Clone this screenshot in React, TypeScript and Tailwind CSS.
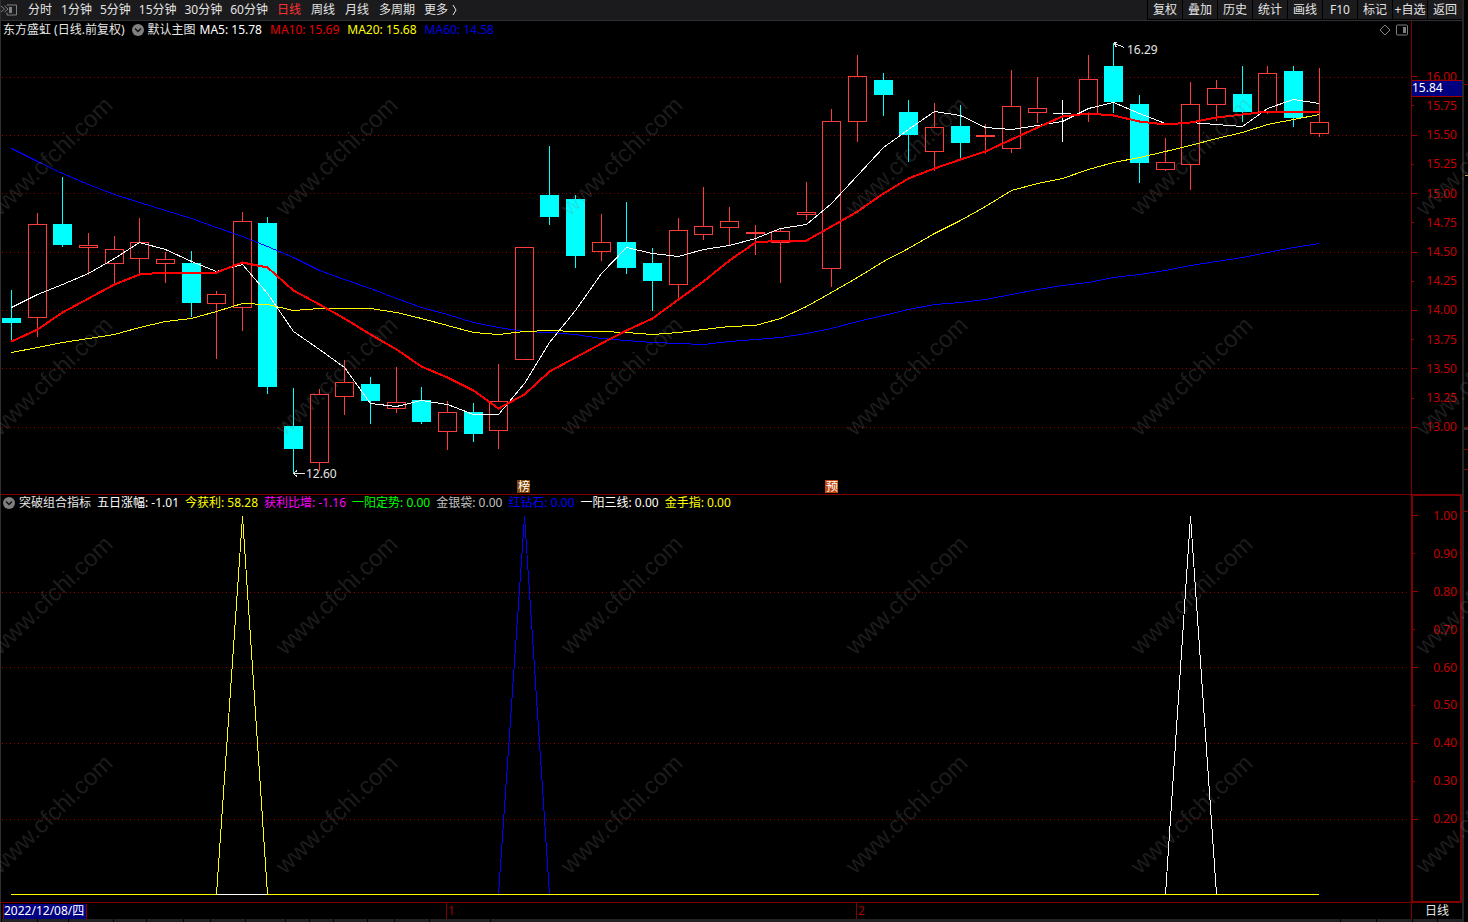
import React from 'react'

type Candle = [x: number, high: number, top: number, bottom: number, low: number, kind: 'up' | 'down' | 'flat']

const MINUTES = ['1分钟', '5分钟', '15分钟', '30分钟', '60分钟']
const PERIODS = ['日线', '周线', '月线', '多周期']
const ACTIONS = ['复权', '叠加', '历史', '统计', '画线', 'F10', '标记', '+自选', '返回']

const PRICES = ['16.00', '15.75', '15.50', '15.25', '15.00', '14.75', '14.50', '14.25', '14.00', '13.75', '13.50', '13.25', '13.00']
const LEVELS = ['1.00', '0.90', '0.80', '0.70', '0.60', '0.50', '0.40', '0.30', '0.20']

const CANDLES: Candle[] = [
  [11, 290, 318, 323, 340, 'down'],
  [37, 213, 224, 318, 337, 'up'],
  [62, 177, 224, 245, 247, 'down'],
  [88, 233, 245, 248, 275, 'up'],
  [114, 236, 249, 264, 286, 'up'],
  [139, 218, 242, 259, 274, 'up'],
  [165, 252, 259, 264, 283, 'up'],
  [191, 251, 263, 303, 317, 'down'],
  [216, 291, 294, 304, 359, 'up'],
  [242, 212, 221, 308, 331, 'up'],
  [267, 217, 223, 387, 394, 'down'],
  [293, 388, 426, 449, 473, 'down'],
  [319, 389, 394, 463, 471, 'up'],
  [344, 360, 382, 397, 415, 'up'],
  [370, 377, 384, 401, 424, 'down'],
  [396, 367, 402, 409, 413, 'up'],
  [421, 387, 400, 422, 424, 'down'],
  [447, 401, 412, 432, 450, 'up'],
  [473, 403, 412, 434, 442, 'down'],
  [498, 364, 401, 431, 449, 'up'],
  [524, 247, 247, 360, 360, 'up'],
  [549, 146, 195, 217, 225, 'down'],
  [575, 195, 199, 256, 268, 'down'],
  [601, 214, 242, 252, 261, 'up'],
  [626, 202, 242, 268, 274, 'down'],
  [652, 248, 263, 281, 311, 'down'],
  [678, 218, 230, 285, 298, 'up'],
  [703, 187, 226, 235, 240, 'up'],
  [729, 207, 221, 228, 245, 'up'],
  [755, 225, 232, 234, 255, 'up'],
  [780, 229, 231, 243, 283, 'up'],
  [806, 182, 212, 215, 220, 'up'],
  [831, 109, 121, 269, 287, 'up'],
  [857, 55, 76, 122, 142, 'up'],
  [883, 73, 80, 95, 116, 'down'],
  [908, 100, 112, 135, 162, 'down'],
  [934, 103, 127, 152, 171, 'up'],
  [960, 105, 126, 143, 158, 'down'],
  [985, 124, 135, 137, 154, 'up'],
  [1011, 70, 106, 149, 153, 'up'],
  [1037, 77, 108, 113, 123, 'up'],
  [1062, 100, 113, 114, 142, 'flat'],
  [1088, 55, 79, 114, 122, 'up'],
  [1113, 43, 66, 102, 113, 'down'],
  [1139, 95, 104, 163, 183, 'down'],
  [1165, 138, 162, 170, 171, 'up'],
  [1190, 82, 104, 165, 190, 'up'],
  [1216, 80, 88, 105, 121, 'up'],
  [1242, 66, 94, 112, 122, 'down'],
  [1267, 66, 73, 112, 114, 'up'],
  [1293, 66, 71, 118, 127, 'down'],
  [1319, 68, 122, 134, 137, 'up'],
]

const MA5 = [
  307, 294, 284, 273, 258, 242, 249, 261, 271, 264, 293, 331, 349, 367, 403, 406, 400, 404, 414, 414, 383, 342, 310, 273, 247, 253,
  256, 249, 245, 238, 228, 224, 203, 175, 147, 129, 111, 115, 127, 129, 125, 121, 108, 102, 113, 123, 122, 124, 126, 108, 99, 103,
]
const MA10 = [
  341, 329, 312, 298, 284, 274, 272, 272, 272, 262, 267, 290, 304, 318, 334, 349, 366, 377, 390, 408, 394, 371, 357, 343, 330, 318,
  299, 281, 260, 242, 240, 240, 226, 211, 193, 178, 168, 159, 151, 139, 127, 116, 113, 115, 121, 124, 122, 117, 114, 111, 111, 112,
]
const MA20 = [
  352, 347, 342, 338, 334, 327, 321, 318, 311, 303, 304, 310, 308, 308, 308, 312, 318, 325, 332, 334, 331, 330, 331, 331, 332, 334,
  332, 329, 326, 325, 318, 306, 292, 277, 261, 248, 233, 220, 206, 190, 183, 178, 169, 162, 157, 151, 145, 138, 132, 124, 119, 114,
]
const MA60 = [
  148, 161, 173, 184, 194, 202, 210, 218, 227, 236, 246, 257, 270, 279, 288, 298, 307, 314, 322, 327, 331, 332, 334, 338, 340, 342,
  343, 344, 341, 339, 337, 333, 328, 321, 315, 309, 304, 302, 299, 294, 289, 285, 282, 277, 274, 270, 265, 261, 257, 252, 247, 243,
]

const toPoints = (ys: number[]) => ys.map((y, i) => `${CANDLES[i][0] + 0.5},${y + 0.5}`).join(' ')

function Grid({ rows }: { rows: number[] }) {
  return (
    <g stroke="#8c0000" strokeDasharray="1 3">
      {rows.map((y) => (
        <line key={y} x1="2" x2="1408" y1={y + 0.5} y2={y + 0.5} />
      ))}
    </g>
  )
}

function CandleShape({ candle }: { candle: Candle }) {
  const [x, high, top, bottom, low, kind] = candle
  if (kind === 'down') {
    return (
      <g fill="#00ffff">
        <rect x={x} y={high} width="1" height={low - high} />
        <rect x={x - 9} y={top} width="19" height={bottom - top} />
      </g>
    )
  }
  if (kind === 'flat') {
    return (
      <g fill="#ffffff">
        <rect x={x} y={high} width="1" height={low - high} />
        <rect x={x - 9} y={top} width="18" height="1" />
      </g>
    )
  }
  return (
    <g fill="#ff3c3c">
      <rect x={x} y={high} width="1" height={top - high} />
      <rect x={x} y={bottom} width="1" height={low - bottom} />
      <rect x={x - 8.5} y={top + 0.5} width="18" height={bottom - top - 1} fill="none" stroke="#ff3c3c" />
    </g>
  )
}

function PriceChart() {
  return (
    <svg
      className="block min-h-0 w-full flex-1"
      viewBox="1 39 1410 455"
      preserveAspectRatio="none"
      shapeRendering="crispEdges"
      role="img"
      aria-label="东方盛虹 日线"
    >
      <Grid rows={[77, 135, 193, 252, 310, 368, 427]} />
      {CANDLES.map((c) => (
        <CandleShape key={c[0]} candle={c} />
      ))}
      <g fill="none">
        <polyline points={toPoints(MA60)} stroke="#0000ff" />
        <polyline points={toPoints(MA20)} stroke="#ffff00" />
        <polyline points={toPoints(MA5)} stroke="#ffffff" />
        <polyline points={toPoints(MA10)} stroke="#ff0000" strokeWidth="2" />
      </g>

      {/* high / low marks */}
      <g fill="none" stroke="#e6e6e6">
        <path d="M1124.500 47.500L1114.500 43.500M1113.500 42.500H1117M1114.500 43.500L1116.500 47.500" />
        <path d="M293.500 473.500H305M297 470.500L293.500 473.500L297 476.500" />
      </g>
      <g fill="#e6e6e6" className="text-xs">
        <text x="1127" y="54">16.29</text>
        <text x="306" y="478">12.60</text>
      </g>

      <rect x="517" y="480" width="13" height="13" fill="#804000" />
      <rect x="825" y="480" width="13" height="13" fill="#c04810" />
      <g fill="#ffffff" className="text-xs">
        <text x="518" y="491">榜</text>
        <text x="826" y="491">预</text>
      </g>
    </svg>
  )
}

function SignalChart() {
  return (
    <svg
      className="block min-h-0 w-full flex-1"
      viewBox="1 511 1410 391"
      preserveAspectRatio="none"
      shapeRendering="crispEdges"
      role="img"
      aria-label="突破组合指标"
    >
      <Grid rows={[592, 667, 743, 819]} />
      <g fill="none">
        <path d="M11 894.500H1319" stroke="#ffff00" />
        <path d="M217 894.500H267" stroke="#ffffff" />
        <path d="M216.500 894.500L242.500 516.500L267.500 894.500" stroke="#ffff00" />
        <path d="M498.500 894.500L524.500 516.500L549.500 894.500" stroke="#0000ff" />
        <path d="M1165.500 894.500L1190.500 516.500L1216.500 894.500" stroke="#ffffff" />
        <path d="M498 894.500H550M1165 894.500H1217" stroke="#ffff00" />
      </g>
    </svg>
  )
}

function AxisLabels({ labels }: { labels: string[] }) {
  return (
    <>
      {labels.map((label, i) => (
        <div key={label} className="flex min-h-0 flex-1 items-center justify-between">
          <span className={i % 2 === 0 ? 'h-px w-[5px] bg-[#a00000]' : 'h-px w-0.5 bg-[#a00000]'} />
          <span className="leading-4">{label}</span>
        </div>
      ))}
    </>
  )
}

function ToggleIcon() {
  return (
    <svg className="size-3 shrink-0" viewBox="0 0 12 12" aria-hidden="true">
      <circle cx="6" cy="6" r="6" fill="#808080" />
      <path d="M3 4.500L6 7.500L9 4.500" fill="none" stroke="#101010" strokeWidth="1.500" />
    </svg>
  )
}

function Toolbar() {
  return (
    <nav className="flex h-[21px] shrink-0 items-stretch border-b border-[#303032] bg-[#1b1b1d] text-[#e4e4e4]">
      <div className="flex flex-1 items-center gap-[9px]">
        <button type="button" aria-label="展开侧栏" className="w-[18px]">
          <svg className="h-3 w-[18px]" viewBox="0 0 18 12" fill="none" stroke="#808080" aria-hidden="true">
            <path d="M0 2L3.500 5L0 8M3.500 2L7 5L3.500 8" />
            <path d="M6 1.500V1H15.500V11H6V8.500" />
            <path d="M8 3H11V9H8Z" fill="#808080" stroke="none" />
          </svg>
        </button>
        <button type="button">分时</button>
        <div className="flex gap-2">
          {MINUTES.map((m) => (
            <button key={m} type="button">{m}</button>
          ))}
        </div>
        <div className="flex gap-[10px]">
          {PERIODS.map((p) => (
            <button key={p} type="button" className={p === '日线' ? 'text-[#ff3232]' : ''}>{p}</button>
          ))}
        </div>
        <button type="button" className="flex items-center gap-1">
          更多
          <svg className="h-3 w-2" viewBox="0 0 8 12" fill="none" stroke="#e4e4e4" aria-hidden="true">
            <path d="M1 1L4 6L1 11" />
          </svg>
        </button>
      </div>
      <div className="flex border-b border-black">
        {ACTIONS.map((a) => (
          <button key={a} type="button" className="w-[35px] shrink-0 border-l border-black whitespace-nowrap">{a}</button>
        ))}
      </div>
    </nav>
  )
}

function PricePanel() {
  return (
    <section className="flex min-h-0 flex-[473]">
      <div className="flex min-w-0 flex-1 flex-col">
        <header className="flex h-[18px] shrink-0 items-center gap-1 pr-0.5 pl-0.5 whitespace-nowrap text-[#e6e6e6]">
          <h1 className="pr-[3px]">东方盛虹 (日线.前复权)</h1>
          <button type="button" className="flex items-center gap-1">
            <ToggleIcon />
            默认主图
          </button>
          <div className="flex flex-1 gap-2">
            <span className="text-white">MA5: 15.78</span>
            <span className="text-[#e60000]">MA10: 15.69</span>
            <span className="text-[#ffff00]">MA20: 15.68</span>
            <span className="text-[#0000e0]">MA60: 14.58</span>
          </div>
          <button type="button" aria-label="标记点">
            <svg className="size-3" viewBox="0 0 12 12" fill="none" stroke="#808080" aria-hidden="true">
              <path d="M6 1L11 6L6 11L1 6Z" />
            </svg>
          </button>
          <button type="button" aria-label="分栏">
            <svg className="h-3 w-[14px]" viewBox="0 0 14 12" aria-hidden="true">
              <rect x="1.500" y="1" width="11" height="10" rx="1" fill="none" stroke="#808080" />
              <rect x="8" y="3" width="3" height="6" fill="#808080" />
            </svg>
          </button>
        </header>
        <PriceChart />
      </div>
      <div className="relative flex w-[51px] shrink-0 flex-col border-l border-[#800000] pt-[41px] pr-[5px] pb-[52px] text-[#c40000]">
        <AxisLabels labels={PRICES} />
        <div className="absolute inset-x-0 top-[59px] h-[17px] border-y border-[#a00000] bg-[#000080] leading-[14px] text-white">
          15.84
        </div>
      </div>
    </section>
  )
}

function SignalPanel() {
  return (
    <section className="flex min-h-0 flex-[407]">
      <div className="flex min-w-0 flex-1 flex-col">
        <header className="flex h-4 shrink-0 items-center gap-[6px] pl-0.5 whitespace-nowrap">
          <button type="button" className="flex items-center gap-1 text-[#e6e6e6]">
            <ToggleIcon />
            突破组合指标
          </button>
          <span className="text-white">五日涨幅: -1.01</span>
          <span className="text-[#ffff00]">今获利: 58.28</span>
          <span className="text-[#ff00ff]">获利比增: -1.16</span>
          <span className="text-[#00ff00]">一阳定势: 0.00</span>
          <span className="text-[#c0c0c0]">金银袋: 0.00</span>
          <span className="text-[#0000ff]">红钻石: 0.00</span>
          <span className="text-white">一阳三线: 0.00</span>
          <span className="text-[#ffff00]">金手指: 0.00</span>
        </header>
        <SignalChart />
      </div>
      <div className="flex w-[51px] shrink-0 flex-col border-x-2 border-y border-[#800000] pt-px pr-[3px] pb-[63px] text-[#c40000]">
        <AxisLabels labels={LEVELS} />
      </div>
    </section>
  )
}

function StatusStrip() {
  return (
    <div className="flex h-[3px] shrink-0 gap-px pl-px *:bg-[#222224]">
      <i className="w-[35px]" />
      <i className="w-[30px]" />
      <i className="w-11" />
      <i className="w-8" />
      <i className="w-9" />
      <i className="w-[26px]" />
      <i className="w-[34px]" />
      <i className="w-[39px]" />
      <i className="w-[23px]" />
      <i className="w-[23px]" />
      <i className="w-[33px]" />
      <i className="w-[26px]" />
      <i className="w-[34px]" />
      <i className="w-[60px]" />
      <i className="flex-1" />
      <i className="w-[35px]" />
      <i className="w-[35px]" />
      <i className="w-6" />
      <i className="w-6" />
    </div>
  )
}

// Faint site mark repeated over the whole window
function Watermark() {
  return (
    <svg className="pointer-events-none absolute inset-0 size-full" aria-hidden="true">
      <g fill="#808080" fillOpacity="0.22" className="font-['Liberation_Sans',sans-serif] text-2xl">
        {[217, 437, 656, 875].map((y) =>
          [0, 285, 570, 855, 1140, 1425].map((x) => (
            <text key={`${x}-${y}`} transform={`translate(${x} ${y}) rotate(-44)`}>www.cfchi.com</text>
          ))
        )}
      </g>
    </svg>
  )
}

export default function App() {
  return (
    <div className="relative flex h-screen overflow-hidden bg-black font-['Noto_Sans','Noto_Sans_CJK_SC',sans-serif] text-xs leading-4">
      <main className="flex min-w-0 flex-1 flex-col border-r-2 border-l border-r-[#262626] border-l-[#303032]">
        <Toolbar />
        <PricePanel />
        <div className="h-px shrink-0 bg-[#800000]" />
        <SignalPanel />
        <div className="h-px shrink-0 bg-[#800000]" />
        <footer className="flex h-4 shrink-0">
          <div className="grid flex-1 grid-cols-[445fr_410fr_555fr] text-[#a00000]">
            <div className="pl-0.5">
              <time dateTime="2022-12-08" className="inline-block h-[15px] border-x border-[#800000] bg-[#000080] pr-0.5 leading-[14px] text-white">
                2022/12/08/四
              </time>
            </div>
            <div className="border-l border-[#800000] pl-px">1</div>
            <div className="border-l border-[#800000] pl-px">2</div>
          </div>
          <button type="button" className="w-[51px] shrink-0 border-l border-[#800000] text-[#e6e6e6]">日线</button>
        </footer>
        <StatusStrip />
      </main>
      <svg className="h-full w-1 shrink-0" viewBox="0 0 4 922" preserveAspectRatio="none" aria-hidden="true">
        <path d="M0 84.500H4M0 427.500H4M0 449.500H4M0 469.500H4M0 511.500H4" stroke="#800000" />
        <path d="M1 175.500H4" stroke="#c8a040" />
        <path d="M0 429H4" stroke="#303032" strokeWidth="2" />
      </svg>
      <Watermark />
    </div>
  )
}
